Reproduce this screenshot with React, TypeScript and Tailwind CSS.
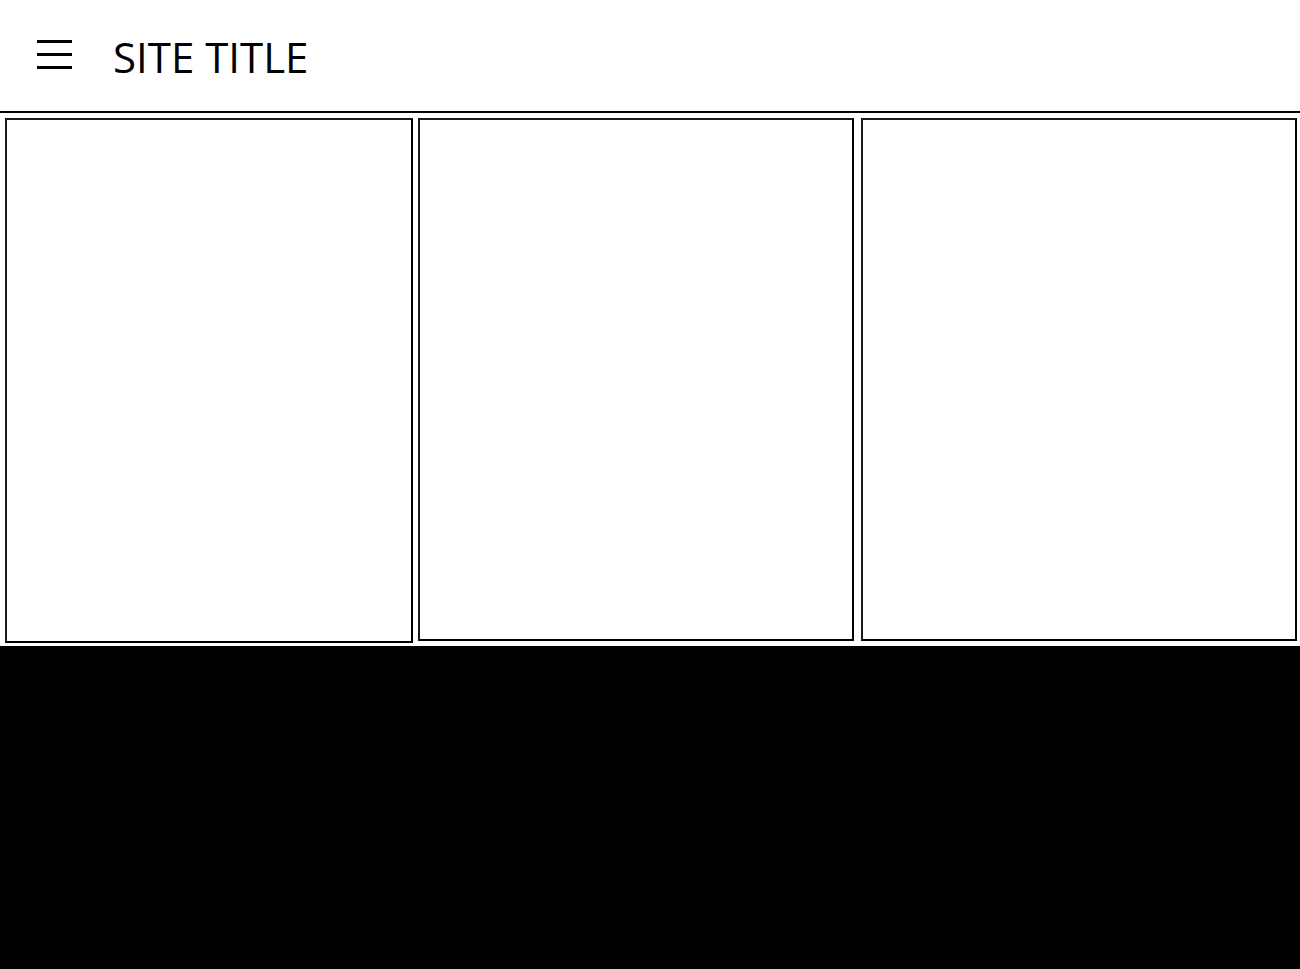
export default function App() {
  return (
    <div className="min-h-screen bg-white" style={{ fontFamily: '"Open Sans", "Noto Sans", sans-serif' }}>
      {/* Header */}
      <header className="flex h-[113px] items-center border-b-2 border-black pb-[2px]">
        <button className="ml-[37px] flex w-[35px] flex-col gap-[10px]" aria-label="menu">
          <span className="block h-[3px] w-[35px] bg-black" />
          <span className="block h-[3px] w-[35px] bg-black" />
          <span className="block h-[3px] w-[35px] bg-black" />
        </button>
        <h1 className="ml-[41px] mt-[4px] text-[42px] font-normal leading-none text-black">SITE TITLE</h1>
      </header>

      {/* Panels */}
      <main className="flex items-start pl-[5px] pt-[5px]">
        <div className="h-[525px] w-[408px] border-2 border-black border-l-[#1a1a1a] border-t-[#1a1a1a]" />
        <div className="ml-[5px] h-[523px] w-[436px] border-2 border-black border-l-[#1a1a1a] border-t-[#1a1a1a]" />
        <div className="ml-[7px] h-[523px] w-[436px] border-2 border-black border-l-[#1a1a1a] border-t-[#1a1a1a]" />
      </main>

      {/* Footer */}
      <footer className="mt-[3px] h-[323px] bg-black" />
    </div>
  );
}
